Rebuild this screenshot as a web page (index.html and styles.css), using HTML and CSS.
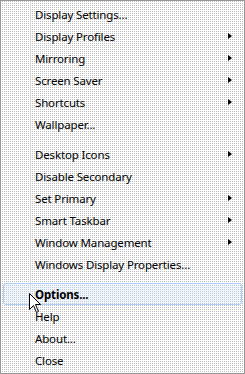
FILE: index.html
```html
<!DOCTYPE html>
<html lang="en">
<head>
  <meta charset="UTF-8">
  <title>Menu</title>
  <link rel="stylesheet" href="styles.css">
</head>
<body>
  <div class="menu">
    <div class="gutter"></div>
    <div class="item">Display Settings...</div>
    <div class="item sub">Display Profiles</div>
    <div class="item sub">Mirroring</div>
    <div class="item sub">Screen Saver</div>
    <div class="item sub">Shortcuts</div>
    <div class="item">Wallpaper...</div>
    <div class="sep"></div>
    <div class="item sub">Desktop Icons</div>
    <div class="item">Disable Secondary</div>
    <div class="item sub">Set Primary</div>
    <div class="item sub">Smart Taskbar</div>
    <div class="item sub">Window Management</div>
    <div class="item">Windows Display Properties...</div>
    <div class="sep"></div>
    <div class="item hot default">Options...</div>
    <div class="item">Help</div>
    <div class="item">About...</div>
    <div class="item">Close</div>

    <!-- mouse pointer over the menu -->
    <svg class="cursor" width="13" height="21" viewBox="0 0 13 21">
      <path d="M0.5 0.5 L0.5 16.5 L4.5 12.5 L7.5 19.5 L9.5 18.5 L6.5 11.5 L11.5 11.5 Z" fill="#fff" stroke="#000" stroke-width="1"/>
    </svg>
  </div>
</body>
</html>
```

FILE: styles.css
```css
body {
  margin: 0;
  padding: 0;
  background-color: #fff;
}

.menu {
  position: relative;
  width: 245px;
  height: 374px;
  box-sizing: border-box;
  border: 1px solid #979797;
  padding: 2px 2px;
  background-color: #fff;
  background-image: conic-gradient(from 90deg at 1px 1px, #fff 75%, #bcbcbc 0);
  background-size: 2px 2px;
  font-family: "Noto Sans", "Segoe UI", sans-serif;
  font-size: 11.5px;
  letter-spacing: -0.15px;
  color: #000;
}

.gutter {
  position: absolute;
  top: 0;
  bottom: 0;
  left: 29px;
  width: 1px;
  background-color: #d8d8d8;
}

.item {
  position: relative;
  height: 22px;
  line-height: 22px;
  padding-left: 31px;
  box-sizing: border-box;
  border: 1px solid transparent;
  border-radius: 3px;
}

.item.sub::after {
  content: "";
  position: absolute;
  right: 9px;
  top: 7px;
  border-top: 3.5px solid transparent;
  border-bottom: 3.5px solid transparent;
  border-left: 4px solid #000;
}

.item.hot {
  border-color: #aecff7;
  background-color: rgba(214, 232, 255, 0.35);
}

.item.default {
  font-weight: bold;
}

.sep {
  height: 8px;
}

.cursor {
  position: absolute;
  left: 28px;
  top: 292px;
}
```
